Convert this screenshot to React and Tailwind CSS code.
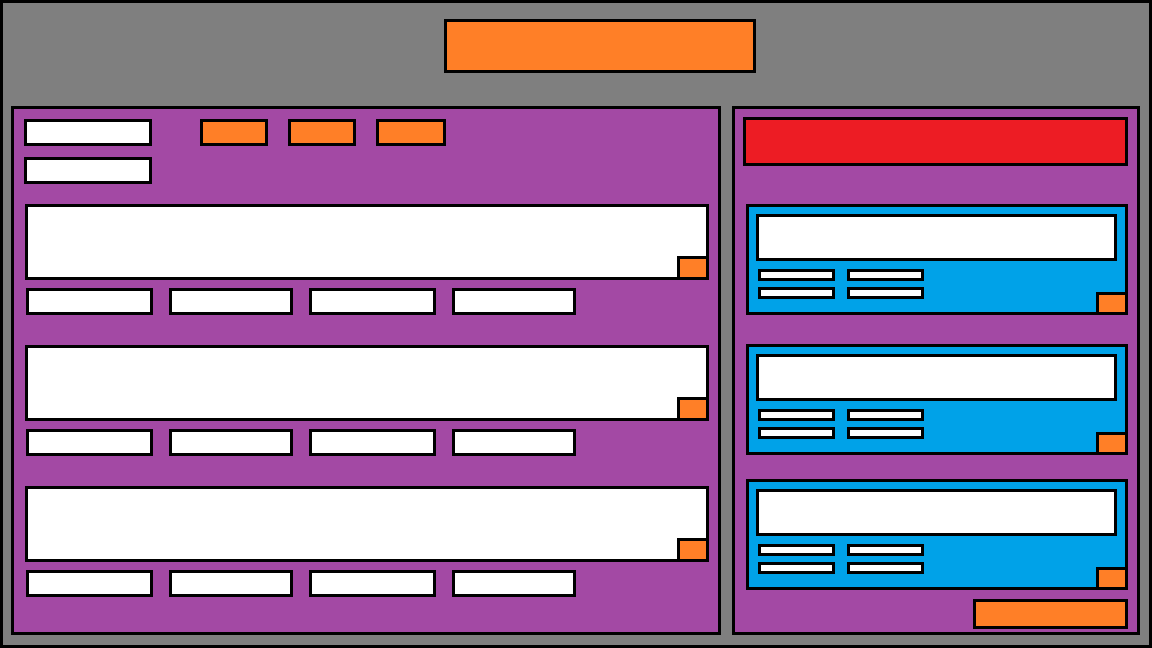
const ROWS = ["first", "second", "third"];

function Slot({ className }) {
  return <div className={`border-3 border-black bg-white ${className}`} />;
}

function ActionButton({ label, className }) {
  return (
    <button
      type="button"
      aria-label={label}
      className={`block cursor-pointer border-3 border-black bg-[#ff7f27] ${className}`}
    />
  );
}

function Entry({ name }) {
  return (
    <article>
      <div className="relative h-[76px] border-3 border-black bg-white">
        <ActionButton
          label={`Open ${name} entry`}
          className="absolute -right-[3px] -bottom-[3px] h-6 w-8"
        />
      </div>
      <div className="mt-2 flex gap-4 pl-px">
        <Slot className="h-[27px] w-[127px]" />
        <Slot className="h-[27px] w-[124px]" />
        <Slot className="h-[27px] w-[127px]" />
        <Slot className="h-[27px] w-[124px]" />
      </div>
    </article>
  );
}

function Card({ name }) {
  return (
    <article className="relative border-3 border-black bg-[#00a2e8] pt-[7px] pr-2 pb-[13px] pl-[7px]">
      <Slot className="h-[47px]" />
      <div className="mt-2 grid grid-cols-[77px_77px] gap-x-3 gap-y-1.5 pl-0.5">
        <Slot className="h-3" />
        <Slot className="h-3" />
        <Slot className="h-3" />
        <Slot className="h-3" />
      </div>
      <ActionButton
        label={`Open ${name} card`}
        className="absolute -right-[3px] -bottom-[3px] h-[23px] w-8"
      />
    </article>
  );
}

export default function App() {
  return (
    <div className="flex min-h-screen flex-col border-3 border-black bg-[#7f7f7f] pt-4 pr-[9px] pb-[10px] pl-2">
      <header className="flex justify-center pb-[33px] pl-12">
        <ActionButton label="Main action" className="h-[54px] w-[312px]" />
      </header>

      <div className="grid flex-1 grid-cols-[710fr_408fr] gap-[11px]">
        <main className="border-3 border-black bg-[#a349a4] pt-[10px] pb-[10px]">
          <div className="flex items-start gap-12 px-[10px]">
            <div className="flex flex-col gap-[11px]">
              <Slot className="h-[27px] w-32" />
              <Slot className="h-[27px] w-32" />
            </div>
            <div className="flex gap-5">
              <ActionButton label="First filter" className="h-[27px] w-[68px]" />
              <ActionButton label="Second filter" className="h-[27px] w-[68px]" />
              <ActionButton label="Third filter" className="h-[27px] w-[70px]" />
            </div>
          </div>
          <div className="mt-5 flex flex-col gap-[30px] pr-[9px] pl-[11px]">
            {ROWS.map((name) => (
              <Entry key={name} name={name} />
            ))}
          </div>
        </main>

        <aside className="flex flex-col border-3 border-black bg-[#a349a4] pt-2 pr-[9px] pb-[3px] pl-2">
          <div className="h-[49px] border-3 border-black bg-[#ed1c24]" />
          <div className="mt-[38px] flex flex-col gap-[29px] pl-[3px]">
            <Card name="first" />
            <Card name="second" />
          </div>
          <div className="mt-6 flex flex-col gap-[9px] pl-[3px]">
            <Card name="third" />
            <ActionButton label="Continue" className="h-[30px] w-[155px] self-end" />
          </div>
        </aside>
      </div>
    </div>
  );
}
